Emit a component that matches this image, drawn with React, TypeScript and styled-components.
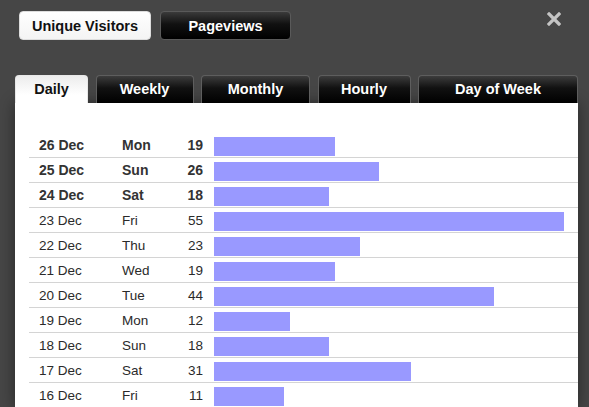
import styled, { createGlobalStyle } from "styled-components";

interface Visit {
    date: string;
    day: string;
    count: number;
}

const visits: Visit[] = [
    { date: "26 Dec", day: "Mon", count: 19 },
    { date: "25 Dec", day: "Sun", count: 26 },
    { date: "24 Dec", day: "Sat", count: 18 },
    { date: "23 Dec", day: "Fri", count: 55 },
    { date: "22 Dec", day: "Thu", count: 23 },
    { date: "21 Dec", day: "Wed", count: 19 },
    { date: "20 Dec", day: "Tue", count: 44 },
    { date: "19 Dec", day: "Mon", count: 12 },
    { date: "18 Dec", day: "Sun", count: 18 },
    { date: "17 Dec", day: "Sat", count: 31 },
    { date: "16 Dec", day: "Fri", count: 11 },
];

const tabs = ["Daily", "Weekly", "Monthly", "Hourly", "Day of Week"];
const tabWidths = [73, 98, 109, 93, 160];

const MAX_BAR = 350;

const App = () => {
    const max = Math.max(...visits.map(v => v.count));

    return (
        <Page>
            <GlobalStyle />
            <TopBar>
                <ModeButton active>Unique Visitors</ModeButton>
                <ModeButton>Pageviews</ModeButton>
                <Close aria-label="close">
                    <svg width="14" height="14" viewBox="0 0 14 14">
                        <path d="M2 2 L12 12 M12 2 L2 12" stroke="#c4c4c4" strokeWidth="3.2" strokeLinecap="square" />
                    </svg>
                </Close>
            </TopBar>
            <Tabs>
                {tabs.map((t, i) => (
                    <Tab key={t} active={i === 0} width={tabWidths[i]}>{t}</Tab>
                ))}
            </Tabs>
            <Panel>
                {visits.map((v, i) => (
                    <Row key={v.date} strong={i < 3}>
                        <Cell>{v.date}</Cell>
                        <Cell>{v.day}</Cell>
                        <Count>{v.count}</Count>
                        <Bar style={{ width: Math.round(v.count / max * MAX_BAR) }} />
                    </Row>
                ))}
            </Panel>
        </Page>
    );
};

const GlobalStyle = createGlobalStyle`
    html, body {
        margin: 0;
        padding: 0;
        background: #464646;
        overflow: hidden;
    }
    body {
        font-family: "Liberation Sans", Arial, sans-serif;
    }
`;

const Page = styled.div`
    width: 589px;
    height: 407px;
    padding-top: 11px;
    box-sizing: border-box;
    overflow: hidden;
`;

const TopBar = styled.div`
    display: flex;
    align-items: center;
    gap: 9px;
    padding: 0 28px 0 19px;
`;

const ModeButton = styled.button<{ active?: boolean }>`
    height: 29px;
    width: ${p => (p.active ? 132 : 131)}px;
    border-radius: 4px;
    font-family: inherit;
    font-size: 14.5px;
    font-weight: bold;
    padding: 0;
    cursor: pointer;
    color: ${p => (p.active ? "#111" : "#fff")};
    border: 1px solid ${p => (p.active ? "#ddd" : "#5a5a5a")};
    background: ${p => (p.active
        ? "linear-gradient(#ffffff, #f4f4f4)"
        : "linear-gradient(#3a3a3a 0%, #111 45%, #000 100%)")};
`;

const Close = styled.button`
    margin-left: auto;
    margin-top: -14px;
    background: none;
    border: 0;
    padding: 0;
    width: 14px;
    height: 14px;
    display: flex;
    cursor: pointer;
`;

const Tabs = styled.div`
    display: flex;
    gap: 7.5px;
    padding-left: 15px;
    margin-top: 35px;
`;

const Tab = styled.div<{ active?: boolean; width: number }>`
    width: ${p => p.width}px;
    height: 28px;
    box-sizing: border-box;
    display: flex;
    align-items: center;
    justify-content: center;
    padding-bottom: 1px;
    font-size: 14.5px;
    font-weight: bold;
    border-radius: 4px 4px 0 0;
    color: ${p => (p.active ? "#111" : "#fff")};
    border: 1px solid ${p => (p.active ? "#e8e8e8" : "#5e5e5e")};
    border-bottom: 0;
    background: ${p => (p.active
        ? "linear-gradient(#ececec, #ffffff 70%)"
        : "linear-gradient(#3c3c3c 0%, #111 45%, #000 100%)")};
`;

const Panel = styled.div`
    margin: 0 11px 0 15px;
    background: #fff;
    padding: 30px 0 0 14px;
    box-shadow: 0 0 14px rgba(0, 0, 0, 0.45);
`;

const Row = styled.div<{ strong?: boolean }>`
    display: grid;
    grid-template-columns: 83px 55px 26px 1fr;
    align-items: center;
    height: 24px;
    padding-left: 10px;
    border-bottom: 1px solid #d4d4d4;
    color: ${p => (p.strong ? "#333" : "#2a2a2a")};
    font-size: ${p => (p.strong ? "14px" : "13.5px")};
    font-weight: ${p => (p.strong ? "bold" : "normal")};
`;

const Cell = styled.span`
    white-space: nowrap;
`;

const Count = styled.span`
    text-align: right;
`;

const Bar = styled.div`
    height: 19px;
    margin: 2px 0 0 11px;
    background: #9999ff;
`;

export default App;
